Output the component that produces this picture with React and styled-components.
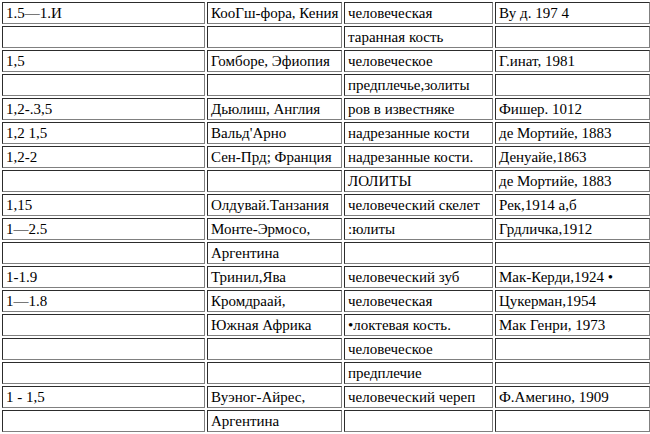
import React from "react";
import styled, { createGlobalStyle } from "styled-components";

const Global = createGlobalStyle`
  html, body {
    margin: 0;
    padding: 0;
    background: #ffffff;
  }
  body {
    color: #000;
    overflow: hidden;
  }
`;

const Page = styled.div`
  width: 650px;
  height: 434px;
  overflow: hidden;
`;

const Table = styled.table`
  width: 652px;
  margin: -1px 0 0 -1px;
  table-layout: fixed;
  border-collapse: separate;
  border-spacing: 2px;
  border: 1px outset #808080;
`;

const Col = styled.col`
  width: ${(p) => p.$w}px;
`;

const Cell = styled.td`
  border: 1px inset #808080;
  height: 20px;
  padding: 0 2px 0 3px;
  font-family: "Liberation Serif", "Times New Roman", serif;
  font-size: 15px;
  line-height: 20px;
  white-space: nowrap;
  overflow: hidden;
  vertical-align: middle;
`;

const widths = [203, 135, 149, 155];

const rows = [
  ["1.5—1.И", "КооГш-фора, Кения", "человеческая", "Ву д. 197 4"],
  ["", "", "таранная кость", ""],
  ["1,5", "Гомборе, Эфиопия", "человеческое", "Г.инат, 1981"],
  ["", "", "предплечье,золиты", ""],
  ["1,2-.3,5", "Дьюлиш, Англия", "ров в известняке", "Фишер. 1012"],
  ["1,2 1,5", "Вальд'Арно", "надрезанные кости", "де Мортийе, 1883"],
  ["1,2-2", "Сен-Прд; Франция", "надрезанные кости.", "Денуайе,1863"],
  ["", "", "ЛОЛИТЫ", "де Мортийе, 1883"],
  ["1,15", "Олдувай.Танзания", "человеческий скелет", "Рек,1914 а,б"],
  ["1—2.5", "Монте-Эрмосо,", ":юлиты", "Грдличка,1912"],
  ["", "Аргентина", "", ""],
  ["1-1.9", "Тринил,Ява", "человеческий зуб", "Мак-Керди,1924 •"],
  ["1—1.8", "Кромдраай,", "человеческая", "Цукерман,1954"],
  ["", "Южная Африка", "•локтевая кость.", "Мак Генри, 1973"],
  ["", "", "человеческое", ""],
  ["", "", "предплечие", ""],
  ["1 - 1,5", "Вуэног-Айрес,", "человеческий череп", "Ф.Амегино, 1909"],
  ["", "Аргентина", "", ""],
];

export default function App() {
  return (
    <Page>
      <Global />
      <Table>
        <colgroup>
          {widths.map((w, i) => (
            <Col key={i} $w={w} />
          ))}
        </colgroup>
        <tbody>
          {rows.map((r, i) => (
            <tr key={i}>
              {r.map((c, j) => (
                <Cell key={j}>{c || "\u00a0"}</Cell>
              ))}
            </tr>
          ))}
        </tbody>
      </Table>
    </Page>
  );
}
